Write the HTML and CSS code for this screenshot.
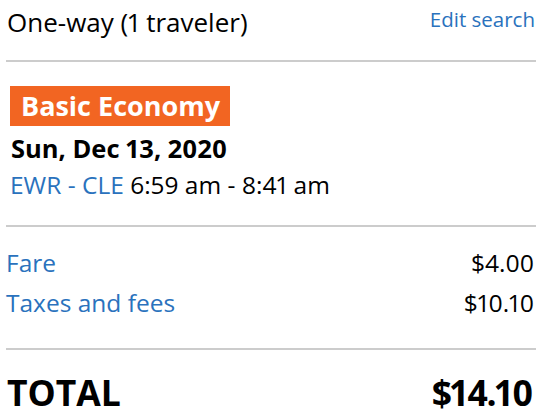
FILE: index.html
```html
<!DOCTYPE html>
<html>
<head>
<meta charset="utf-8">
<link rel="stylesheet" href="styles.css">
</head>
<body>
<div class="summary">
  <div class="header">
    <div class="trip">One-way (1 traveler)</div>
    <a class="link edit">Edit search</a>
  </div>
  <hr class="rule">
  <div class="flight">
    <div class="badge">Basic Economy</div>
    <div class="date">Sun, Dec 13, 2020</div>
    <div class="route"><span class="link">EWR - CLE</span> 6:59 am - 8:41 am</div>
  </div>
  <hr class="rule">
  <div class="prices">
    <div class="row"><span class="link">Fare</span><span>$4.00</span></div>
    <div class="row"><span class="link">Taxes and fees</span><span>$10.10</span></div>
  </div>
  <hr class="rule">
  <div class="row total"><span>TOTAL</span><span class="amount">$14.10</span></div>
</div>
</body>
</html>
```
FILE: styles.css
```css
html, body {
  margin: 0;
  padding: 0;
  background: #fff;
}
body {
  font-family: "Open Sans", "Liberation Sans", sans-serif;
  color: #000;
  font-variant-numeric: proportional-nums;
}
.summary {
  width: 530px;
  margin-left: 6px;
}
.link {
  color: #2a72bd;
}
.header {
  display: flex;
  justify-content: space-between;
  align-items: flex-start;
  padding: 5px 1px 0 1px;
  height: 60px;
  box-sizing: border-box;
}
.trip {
  font-size: 26px;
  line-height: 34px;
}
.edit {
  font-size: 20.5px;
  line-height: 28px;
}
.rule {
  border: 0;
  height: 2px;
  background: #cccccc;
  margin: 0;
}
.flight {
  padding: 24px 0 0 4px;
  height: 163px;
  box-sizing: border-box;
}
.badge {
  display: inline-block;
  background: #f26522;
  color: #fff;
  font-weight: 700;
  font-size: 27px;
  line-height: 40px;
  padding: 0 10px 0 11px;
}
.date {
  font-weight: 700;
  font-size: 25.5px;
  line-height: 34px;
  padding-left: 1px;
  margin-top: 5px;
}
.route {
  font-size: 24.5px;
  line-height: 34px;
  margin-top: 3px;
}
.prices {
  padding: 16px 2px 0 0;
  height: 121px;
  box-sizing: border-box;
}
.row {
  display: flex;
  justify-content: space-between;
  font-size: 24.5px;
  line-height: 40px;
}
.total {
  font-weight: 700;
  font-size: 35.5px;
  line-height: 44px;
  padding: 20px 2px 0 1px;
}
.amount {
  letter-spacing: -1.5px;
  margin-right: 2px;
}
```
